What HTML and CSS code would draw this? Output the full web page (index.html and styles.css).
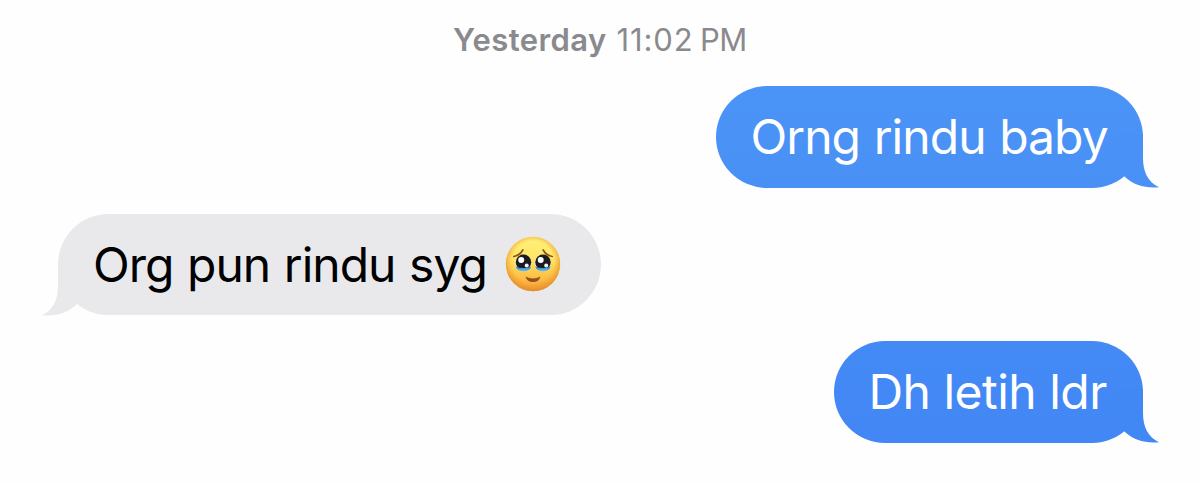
FILE: index.html
```html
<!DOCTYPE html>
<html lang="ms">
<head>
<meta charset="utf-8">
<title>Messages</title>
<link rel="stylesheet" href="styles.css">
</head>
<body>
<main class="thread">
  <div class="stamp"><span class="day">Yesterday</span> <span class="time">11:02</span> <span class="meridiem">PM</span></div>
  <div class="row sent">
    <div class="bubble blue-light">
      <span class="text first">Orng rindu baby</span>
      <svg class="tail" viewBox="0 0 60 54" aria-hidden="true"><path d="M20 0H43V24C43 38 48 48 59 53.2C46 54.6 33 51 24.500 42.500L0 20Z"/></svg>
    </div>
  </div>
  <div class="row received">
    <div class="bubble grey">
      <svg class="tail" viewBox="0 0 60 54" aria-hidden="true"><path d="M20 0H43V24C43 38 48 48 59 53.2C46 54.6 33 51 24.500 42.500L0 20Z"/></svg>
      <span class="text second">Org pun rindu syg</span>
      <svg class="emoji" viewBox="0 0 56 56" role="img" aria-label="Face holding back tears">
        <defs>
          <linearGradient id="skin" x1="0" y1="0" x2="0" y2="1"><stop offset="0" stop-color="#fff27a"/><stop offset=".4" stop-color="#ffe566"/><stop offset=".75" stop-color="#fdbf45"/><stop offset="1" stop-color="#f2a03a"/></linearGradient>
          <radialGradient id="rim" cx=".5" cy=".46" r=".54"><stop offset=".7" stop-color="#f29a2c" stop-opacity="0"/><stop offset="1" stop-color="#e08a2a" stop-opacity=".85"/></radialGradient>
          <linearGradient id="tear" x1="0" y1="0" x2="0" y2="1"><stop offset="0" stop-color="#2079c8"/><stop offset="1" stop-color="#6cc4f2"/></linearGradient>
        </defs>
        <circle cx="28" cy="28" r="27.200" fill="url(#skin)"/>
        <circle cx="28" cy="28" r="27.200" fill="url(#rim)"/>
        <path d="M8.800 20.500Q15 19.500 17.800 14M38.200 14Q41 19.500 47.200 20.500" fill="none" stroke="#87541b" stroke-width="1.700" stroke-linecap="round"/>
        <g id="eye">
          <ellipse cx="18.300" cy="26.800" rx="8.400" ry="8" fill="#f7e7b4"/>
          <circle cx="18.500" cy="26.300" r="7.700" fill="#1c1a1d"/>
          <path d="M10.800 30.500Q18 33.500 26.100 30.500Q25 35.300 18.500 35.300Q12 35.300 10.800 30.500Z" fill="url(#tear)"/>
          <circle cx="16.200" cy="24" r="3" fill="#fff"/>
          <circle cx="21.700" cy="29.500" r="2" fill="#e8f6ff"/>
        </g>
        <use href="#eye" x="19.500"/>
        <path d="M20.500 40.500Q28 44.500 35.500 40.500Q34 46 28 46Q22 46 20.500 40.500Z" fill="#93501d"/>
      </svg>
    </div>
  </div>
  <div class="row sent">
    <div class="bubble blue-deep">
      <span class="text third">Dh letih ldr</span>
      <svg class="tail" viewBox="0 0 60 54" aria-hidden="true"><path d="M20 0H43V24C43 38 48 48 59 53.2C46 54.6 33 51 24.500 42.500L0 20Z"/></svg>
    </div>
  </div>
</main>
</body>
</html>
```
FILE: styles.css
```css
* { box-sizing: border-box; }
body { margin: 0; background: #fefefe; font-family: Inter, "Liberation Sans", sans-serif; }
.thread { width: 1200px; height: 484px; padding: 21px 57px 0 58px; overflow: hidden; display: flex; flex-direction: column; }
.stamp { height: 38px; margin-bottom: 27px; padding-left: 395px; display: flex; align-items: baseline; color: #8a8a8e; font-size: 31px; line-height: 38px; white-space: nowrap; }
.day { width: 163.500px; font-weight: 600; letter-spacing: .420px; }
.time { width: 83.500px; letter-spacing: .900px; }
.meridiem { letter-spacing: -.600px; }
.row { display: flex; height: 101.500px; margin-bottom: 26px; }
.sent { justify-content: flex-end; }
.bubble { position: relative; display: flex; align-items: center; height: 101.500px; border-radius: 51px; font-size: 48px; line-height: 58px; white-space: nowrap; }
.blue-light { width: 427.500px; padding-left: 35px; background: linear-gradient(#4b94f7, #4990f5); color: #fff; }
.blue-deep { width: 309.500px; padding-left: 35px; background: linear-gradient(#448af5, #4287f5); color: #fff; }
.grey { width: 543px; padding-left: 35px; background: #e9e9eb; color: #000; }
.tail { position: absolute; width: 60px; height: 54px; right: -17px; bottom: -.5px; fill: #4991f6; }
.blue-deep .tail { fill: #4288f5; }
.grey .tail { right: auto; left: -17px; transform: scaleX(-1); fill: #e9e9eb; }
.text { position: relative; z-index: 1; padding-top: 1px; }
.first { letter-spacing: -.930px; word-spacing: 1px; }
.second { letter-spacing: -.970px; word-spacing: 1px; }
.third { letter-spacing: -.520px; }
.emoji { width: 56px; height: 56px; margin-left: auto; margin-right: 40px; }
```
